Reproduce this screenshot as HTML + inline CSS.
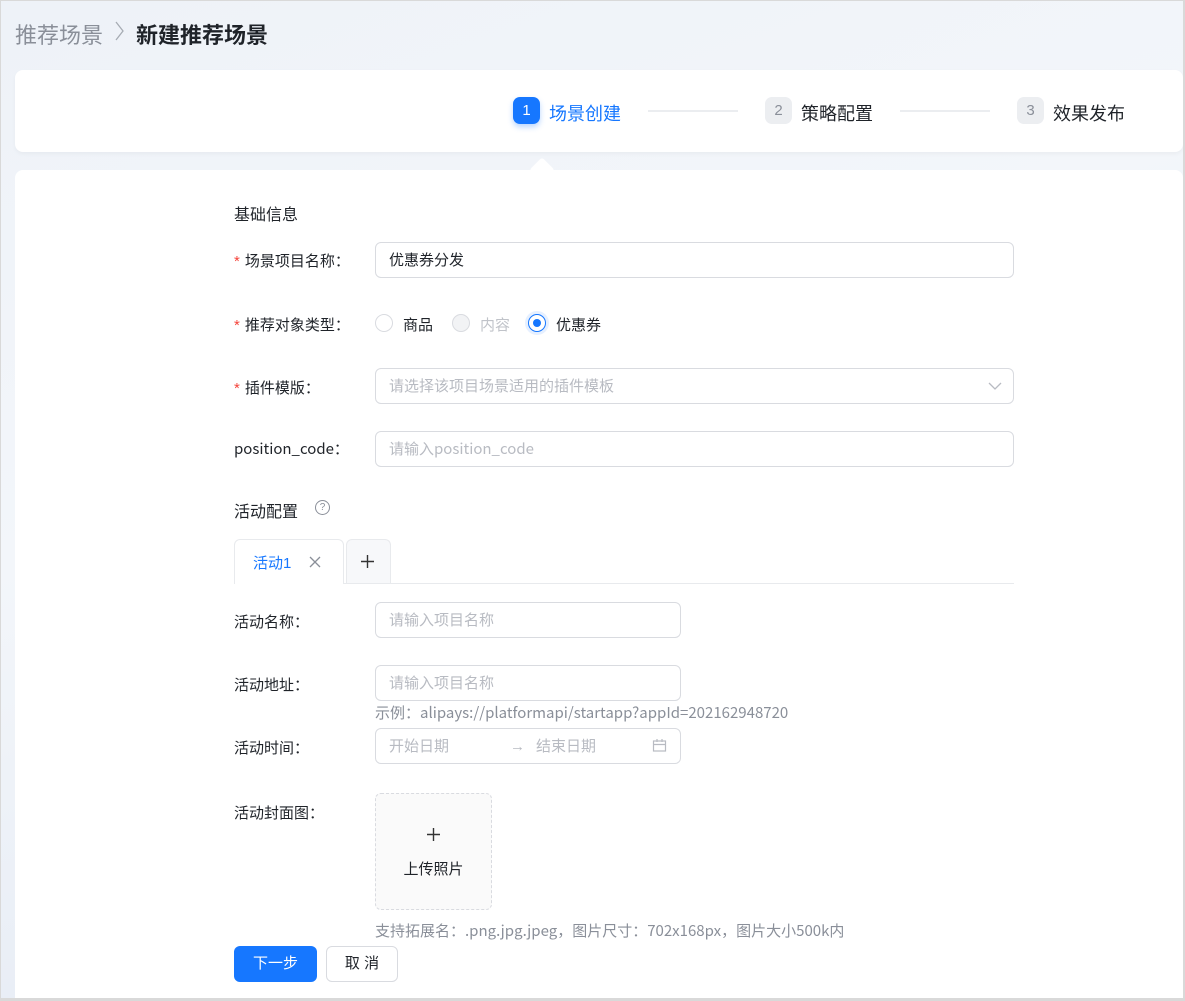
<!DOCTYPE html>
<html><head><meta charset="utf-8"><style>
*{box-sizing:border-box;margin:0;padding:0}
body{width:1185px;height:1001px;overflow:hidden;font-family:"Liberation Sans","Noto Sans CJK SC",sans-serif;background:#fff;position:relative;color:#1f2329}
.page{position:absolute;left:1px;top:1px;width:1182px;height:997px;background:linear-gradient(160deg,#eef2f8 0%,#f3f6fa 40%,#e9eef6 70%,#f1f4f9 100%);}
.frame{position:absolute;left:0;top:0;width:1185px;height:1001px;border:1px solid #d9d9d9;border-right-width:2px;border-bottom-width:3px;pointer-events:none}
.a{position:absolute;white-space:nowrap}
.lbl{font-size:15px;color:#1f2329}
.req{color:#f5443b;margin-right:5px}
.inp{position:absolute;border:1px solid #d9dbe0;border-radius:6px;background:#fff;height:36px;font-size:15px;color:#1f2329;padding:0 13px;line-height:36px}
.ph{color:#b8bbc2}
.noto{font-family:"Noto Sans CJK SC",sans-serif;line-height:20px}
.radio{position:absolute;width:18px;height:18px;border-radius:50%;border:1px solid #d9dbe0;background:#fff}
</style></head><body>
<div class="page"></div>
<div class="a" style="left:15px;top:18px;font-size:22px;color:#8a8f99">推荐场景</div>
<svg class="a" style="left:113px;top:20px" width="12" height="22"><path d="M3 2 L10 11 L3 20" fill="none" stroke="#a6abb3" stroke-width="1.3"/></svg>
<div class="a" style="left:136px;top:18px;font-size:22px;font-weight:bold;color:#1f2329">新建推荐场景</div>

<div class="a" style="left:15px;top:70px;width:1168px;height:82px;background:#fff;border-radius:8px;box-shadow:0 2px 4px rgba(0,0,0,0.04)"></div>
<div class="a" style="left:513px;top:97px;width:27px;height:27px;border-radius:7px;background:#1677ff;color:#fff;font-size:15px;text-align:center;line-height:27px;box-shadow:0 3px 6px rgba(22,119,255,0.3)">1</div>
<div class="a" style="left:549px;top:100px;font-size:18px;color:#1677ff">场景创建</div>
<div class="a" style="left:648px;top:110px;width:90px;height:2px;background:#ebedf0"></div>
<div class="a" style="left:765px;top:97px;width:27px;height:27px;border-radius:7px;background:#eceef1;color:#8a8f99;font-size:15px;text-align:center;line-height:27px">2</div>
<div class="a" style="left:801px;top:100px;font-size:18px;color:#1f2329">策略配置</div>
<div class="a" style="left:900px;top:110px;width:90px;height:2px;background:#ebedf0"></div>
<div class="a" style="left:1017px;top:97px;width:27px;height:27px;border-radius:7px;background:#eceef1;color:#8a8f99;font-size:15px;text-align:center;line-height:27px">3</div>
<div class="a" style="left:1053px;top:100px;font-size:18px;color:#1f2329">效果发布</div>

<div class="a" style="left:15px;top:170px;width:1168px;height:828px;background:#fff;border-radius:8px 8px 0 0"></div>
<div class="a" style="left:533px;top:161px;width:18px;height:18px;background:#fff;transform:rotate(45deg);border-radius:3px"></div>

<div class="a lbl" style="left:234px;top:201px;font-size:16px">基础信息</div>
<div class="a lbl" style="left:234px;top:250px"><span class="req">*</span>场景项目名称：</div>
<div class="inp" style="left:375px;top:242px;width:639px">优惠券分发</div>

<div class="a lbl" style="left:234px;top:314px"><span class="req">*</span>推荐对象类型：</div>
<div class="radio" style="left:375px;top:314px"></div>
<div class="a lbl" style="left:403px;top:314px">商品</div>
<div class="radio" style="left:452px;top:314px;background:#f2f3f5"></div>
<div class="a lbl" style="left:480px;top:314px;color:#c0c3c9">内容</div>
<div class="radio" style="left:528px;top:314px;border:1.5px solid #1677ff;box-shadow:0 0 0 3px #e6f0ff"><div style="position:absolute;left:3.5px;top:3.5px;width:8px;height:8px;border-radius:50%;background:#1677ff"></div></div>
<div class="a lbl" style="left:556px;top:314px">优惠券</div>

<div class="a lbl" style="left:234px;top:377px"><span class="req">*</span>插件模版：</div>
<div class="inp ph" style="left:375px;top:368px;width:639px">请选择该项目场景适用的插件模板</div>
<svg class="a" style="left:988px;top:381px" width="14" height="10"><path d="M1 2 L7 8 L13 2" fill="none" stroke="#b8bbc2" stroke-width="1.3"/></svg>

<div class="a lbl noto" style="left:234px;top:439px">position_code：</div>
<div class="inp ph" style="left:375px;top:431px;width:639px"><span class="noto">请输入position_code</span></div>

<div class="a lbl" style="left:234px;top:498px;font-size:16px">活动配置</div>
<div class="a" style="left:315px;top:500px;width:15px;height:15px;border:1.3px solid #8a8f99;border-radius:50%;font-size:10px;color:#8a8f99;text-align:center;line-height:13px">?</div>

<div class="a" style="left:234px;top:583px;width:780px;height:1px;background:#e8eaed"></div>
<div class="a" style="left:234px;top:539px;width:110px;height:45px;border:1px solid #e8eaed;border-bottom:none;border-radius:6px 6px 0 0;background:#fff"></div>
<div class="a" style="left:253px;top:552px;font-size:15px;color:#1677ff">活动1</div>
<svg class="a" style="left:309px;top:556px" width="12" height="12"><path d="M1 1L11 11M11 1L1 11" stroke="#8a8f99" stroke-width="1.3"/></svg>
<div class="a" style="left:346px;top:539px;width:45px;height:44px;border:1px solid #e8eaed;border-bottom:none;border-radius:6px 6px 0 0;background:#f7f8fa"></div>
<svg class="a" style="left:360px;top:554px" width="15" height="15"><path d="M7.5 1V14M1 7.5H14" stroke="#333" stroke-width="1.4"/></svg>

<div class="a lbl" style="left:234px;top:611px">活动名称：</div>
<div class="inp ph" style="left:375px;top:602px;width:306px">请输入项目名称</div>
<div class="a lbl" style="left:234px;top:674px">活动地址：</div>
<div class="inp ph" style="left:375px;top:665px;width:306px">请输入项目名称</div>
<div class="a noto" style="left:375px;top:703px;font-size:15px;color:#8a8f99">示例：alipays://platformapi/startapp?appId=202162948720</div>
<div class="a lbl" style="left:234px;top:737px">活动时间：</div>
<div class="inp ph" style="left:375px;top:728px;width:306px">开始日期<span style="position:absolute;left:134px">→</span><span style="position:absolute;left:160px">结束日期</span></div>
<svg class="a" style="left:652px;top:738px" width="15" height="15"><rect x="1.5" y="3" width="12" height="10" fill="none" stroke="#b8bbc2" stroke-width="1.2"/><path d="M1.5 6.5H13.5M5 1V4M10 1V4" stroke="#b8bbc2" stroke-width="1.2"/></svg>

<div class="a lbl" style="left:234px;top:802px">活动封面图：</div>
<div class="a" style="left:375px;top:793px;width:117px;height:117px;border:1px dashed #d9dbe0;border-radius:6px;background:#fafafa"></div>
<svg class="a" style="left:426px;top:827px" width="15" height="15"><path d="M7.5 1V14M1 7.5H14" stroke="#333" stroke-width="1.4"/></svg>
<div class="a" style="left:375px;top:858px;width:117px;text-align:center;font-size:15px;color:#1f2329">上传照片</div>
<div class="a noto" style="left:375px;top:921px;font-size:15px;color:#8a8f99">支持拓展名：.png.jpg.jpeg，图片尺寸：702x168px，图片大小500k内</div>

<div class="a" style="left:234px;top:946px;width:83px;height:36px;background:#1677ff;border-radius:6px;color:#fff;font-size:15px;text-align:center;line-height:36px">下一步</div>
<div class="a" style="left:326px;top:946px;width:72px;height:36px;border:1px solid #d9dbe0;border-radius:6px;color:#1f2329;font-size:15px;text-align:center;line-height:34px;background:#fff">取 消</div>
<div class="frame"></div>
</body></html>
